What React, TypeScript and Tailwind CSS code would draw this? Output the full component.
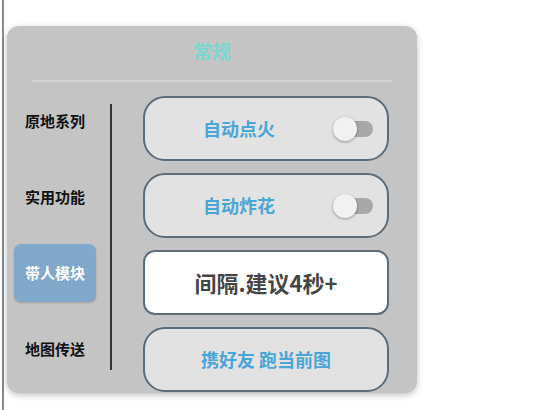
import { useState } from "react";

const tabs = ["原地系列", "实用功能", "带人模块", "地图传送"];

function Toggle({ on, onClick }: { on: boolean; onClick: () => void }) {
  return (
    <button onClick={onClick} className="relative flex h-[24px] w-[42px] shrink-0 items-center">
      <span className={`ml-[10px] h-[16px] w-[30px] rounded-full ${on ? "bg-[#7fb6dc]" : "bg-[#a8a8a8]"}`} />
      <span
        className={`absolute top-0 h-[24px] w-[24px] rounded-full bg-[#f1f1f1] shadow-[0_1px_3px_rgba(0,0,0,0.35)] ${
          on ? "left-[18px]" : "left-0"
        }`}
      />
    </button>
  );
}

export default function App() {
  const [active, setActive] = useState(2);
  const [fire, setFire] = useState(false);
  const [flower, setFlower] = useState(false);

  return (
    <div className="flex h-[410px] w-[535px] bg-white font-['Noto_Sans_CJK_SC','Noto_Sans',sans-serif]">
      <div className="ml-[2px] h-full w-[2px] bg-[#8a8a8a]" />

      <div className="ml-[3px] mt-[26px] flex h-[367px] w-[410px] flex-col overflow-hidden rounded-[12px] bg-[#c4c4c4] shadow-[0_2px_6px_rgba(0,0,0,0.25)]">
        <div className="flex h-[34px] items-end justify-center">
          <span className="text-[19px] font-bold leading-none text-[#76d8cf]">常规</span>
        </div>
        <div className="mx-[25px] mt-[20px] h-[2px] bg-[#d3d3d3]" />

        <div className="flex flex-1">
          <div className="flex w-[82px] shrink-0 flex-col gap-[18px] ml-[7px] pt-[10px]">
            {tabs.map((tab, i) => (
              <button
                key={tab}
                onClick={() => setActive(i)}
                className={`flex h-[58px] items-center justify-center rounded-[7px] text-[15px] font-bold ${
                  active === i
                    ? "bg-[#7fa8cb] text-white shadow-[0_1px_2px_rgba(0,0,0,0.2)]"
                    : "text-[#111]"
                }`}
              >
                {tab}
              </button>
            ))}
          </div>

          <div className="ml-[14px] mt-[22px] h-[266px] w-[2px] bg-[#333]" />

          <div className="ml-[31px] flex w-[246px] flex-col gap-[12px] pt-[14px]">
            <div className="flex h-[65px] items-center rounded-[22px] border-2 border-[#5d6c79] bg-[#e2e2e2] pr-[12px]">
              <span className="flex-1 text-center text-[18px] font-bold text-[#4aa6d8]">自动点火</span>
              <Toggle on={fire} onClick={() => setFire(!fire)} />
            </div>
            <div className="flex h-[65px] items-center rounded-[22px] border-2 border-[#5d6c79] bg-[#e2e2e2] pr-[12px]">
              <span className="flex-1 text-center text-[18px] font-bold text-[#4aa6d8]">自动炸花</span>
              <Toggle on={flower} onClick={() => setFlower(!flower)} />
            </div>
            <div className="flex h-[65px] items-center justify-center rounded-[12px] border-2 border-[#5d6c79] bg-white">
              <span className="text-[22px] font-bold text-[#454545]">间隔.建议4秒+</span>
            </div>
            <div className="flex h-[65px] shrink-0 items-center justify-center rounded-[22px] border-2 border-[#5d6c79] bg-[#e2e2e2]">
              <span className="text-[18px] font-bold text-[#4aa6d8]">携好友 跑当前图</span>
            </div>
          </div>
        </div>
      </div>
    </div>
  );
}
